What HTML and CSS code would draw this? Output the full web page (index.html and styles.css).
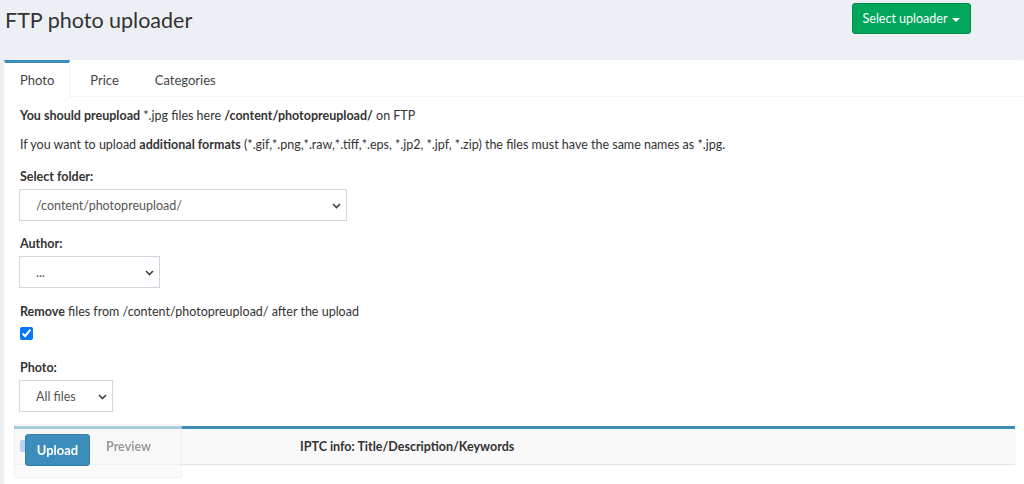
FILE: index.html
```html
<!DOCTYPE html>
<html>
<head>
<meta charset="utf-8">
<link rel="stylesheet" href="styles.css">
</head>
<body>
<header class="page-header">
  <h1 class="title">FTP photo uploader</h1>
  <button class="btn-green">Select uploader <span class="caret"></span></button>
</header>
<div class="tabbox">
  <ul class="tabs">
    <li class="tab active">Photo</li>
    <li class="tab">Price</li>
    <li class="tab">Categories</li>
  </ul>
  <div class="tab-content">
    <p class="line1"><b>You should preupload</b> *.jpg files here <b>/content/photopreupload/</b> on FTP</p>
    <p class="line2">If you want to upload <b>additional formats</b> (*.gif,*.png,*.raw,*.tiff,*.eps, *.jp2, *.jpf, *.zip) the files must have the same names as *.jpg.</p>
    <label class="lbl first">Select folder:</label>
    <div class="sel sel-folder"><span>/content/photopreupload/</span><svg class="chev" width="9" height="6" viewBox="0 0 9 6"><path d="M1 1 L4.5 4.5 L8 1" fill="none" stroke="#444" stroke-width="1.7"/></svg></div>
    <label class="lbl">Author:</label>
    <div class="sel sel-author"><span>...</span><svg class="chev" width="9" height="6" viewBox="0 0 9 6"><path d="M1 1 L4.5 4.5 L8 1" fill="none" stroke="#444" stroke-width="1.7"/></svg></div>
    <p class="remove"><b>Remove</b> files from /content/photopreupload/ after the upload</p>
    <input class="chk" type="checkbox" checked>
    <label class="lbl photo">Photo:</label>
    <div class="sel sel-photo"><span>All files</span><svg class="chev" width="9" height="6" viewBox="0 0 9 6"><path d="M1 1 L4.5 4.5 L8 1" fill="none" stroke="#444" stroke-width="1.7"/></svg></div>
    <div class="iptc">
      <div class="iptc-head">
        <span class="mini-chk"></span>
        <span class="iptc-title">IPTC info: Title/Description/Keywords</span>
      </div>
    </div>
  </div>
</div>
<div class="float-panel">
  <button class="btn-blue">Upload</button>
  <span class="preview">Preview</span>
</div>
</body>
</html>
```
FILE: styles.css
```css
* { box-sizing: border-box; }
html, body { margin: 0; padding: 0; }
body {
  background: #ecf0f5;
  font-family: Lato, "Open Sans", sans-serif;
  font-size: 12.5px;
  color: #333;
  height: 484px;
  overflow: hidden;
}
.page-header {
  display: flex;
  justify-content: space-between;
  align-items: flex-start;
  height: 60px;
  padding: 3px 53px 0 5px;
}
.title {
  margin: 2px 0 0 0;
  font-size: 21.5px;
  font-weight: 400;
  line-height: 30px;
  color: #333;
}
.btn-green {
  width: 119px;
  height: 31px;
  background: #00a65a;
  border: 1px solid #008d4c;
  border-radius: 3px;
  color: #fff;
  font-family: inherit;
  font-size: 12.5px;
  padding: 0;
}
.caret {
  display: inline-block;
  width: 0; height: 0;
  border-left: 4px solid transparent;
  border-right: 4px solid transparent;
  border-top: 4px solid #fff;
  vertical-align: middle;
  margin-left: 2px;
}
.tabbox {
  margin-left: 4px;
  background: #fff;
  border-radius: 3px 3px 0 0;
  height: 424px;
}
.tabs {
  list-style: none;
  margin: 0;
  padding: 0;
  display: flex;
  height: 37px;
  border-bottom: 1px solid #f4f4f4;
}
.tab {
  padding: 0 15px;
  margin-right: 4px;
  line-height: 34px;
  border-top: 3px solid transparent;
  color: #444;
  font-size: 13px;
  border-left: 1px solid transparent;
  border-right: 1px solid transparent;
}
.tab.active {
  border-top-color: #3c8dbc;
  border-right-color: #f4f4f4;
  height: 37px;
  background: #fff;
}
.tab-content {
  padding: 9px 9px 0 15px;
}
p { margin: 0; line-height: 20px; }
b { font-weight: 700; }
.line1 { padding-left: 1px; }
.line2 { margin-top: 9px; padding-left: 1px; }
.lbl {
  display: block;
  font-weight: 700;
  line-height: 20px;
  margin-top: 13px;
  margin-bottom: 2px;
  padding-left: 1px;
}
.lbl.first { margin-top: 12px; }
.lbl.photo { margin-top: 18px; }
.sel {
  position: relative;
  height: 32px;
  border: 1px solid #d2d6de;
  color: #555;
  padding-left: 16px;
  display: flex;
  align-items: center;
  background: #fff;
}
.sel-folder { width: 328px; }
.sel-author { width: 141px; }
.sel-photo { width: 94px; }
.chev { position: absolute; right: 5px; top: 13px; }
.remove { margin-top: 14px; padding-left: 1px; }
.chk {
  display: block;
  margin: 5px 0 0 1px;
  width: 13px;
  height: 13px;
  accent-color: #0075ff;
}
.iptc {
  margin-top: 14px;
  margin-left: -5px;
  width: 1001px;
  border-top: 3px solid #3c8dbc;
  background: #f9f9f9;
  box-shadow: 0 1px 1px rgba(0,0,0,0.1);
  height: 38px;
}
.iptc-head {
  position: relative;
  height: 35px;
  display: flex;
  align-items: center;
}
.mini-chk {
  position: absolute;
  left: 6px;
  top: 11px;
  width: 6px;
  height: 12px;
  background: #5b9cf0;
  border-radius: 2px;
}
.iptc-title {
  margin-left: 286px;
  font-weight: 700;
  color: #333;
}
.float-panel {
  position: fixed;
  left: 14px;
  top: 424px;
  width: 168px;
  height: 54px;
  background: rgba(246,246,246,0.6);
  border: 1px solid rgba(0,0,0,0.04);
  border-radius: 2px;
  display: flex;
  align-items: flex-start;
  padding: 9px 0 0 10px;
}
.btn-blue {
  width: 65px;
  height: 32px;
  background: #3c8dbc;
  border: 1px solid #367fa9;
  border-radius: 3px;
  color: #fff;
  font-family: inherit;
  font-size: 13px;
  font-weight: 700;
  padding: 0;
}
.preview {
  margin-left: 16px;
  margin-top: 5px;
  font-weight: 700;
  color: #999;
}
```
